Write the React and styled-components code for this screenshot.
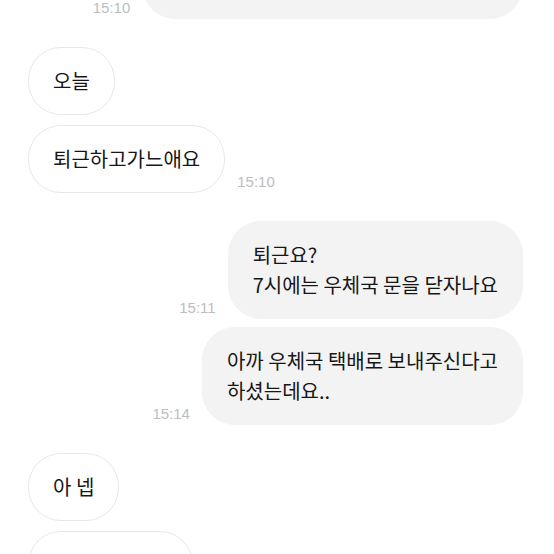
import React from "react"
import styled, { createGlobalStyle } from "styled-components"

const GlobalStyle = createGlobalStyle`
  html, body {
    margin: 0;
    padding: 0;
    background: #ffffff;
  }
  body {
    width: 554px;
    height: 554px;
    overflow: hidden;
    font-family: "Noto Sans CJK KR", "Noto Sans", sans-serif;
  }
`

const Screen = styled.div`
  width: 554px;
  height: 554px;
  overflow: hidden;
  background: #ffffff;
`

const List = styled.div`
  display: flex;
  flex-direction: column;
  gap: 28px;
  margin-top: -49px;
  padding: 0 31px 0 28px;
`

const Group = styled.div`
  display: flex;
  flex-direction: column;
  gap: ${(p) => (p.$mine ? "8px" : "10px")};
`

const Row = styled.div`
  display: flex;
  align-items: flex-end;
  justify-content: ${(p) => (p.$mine ? "flex-end" : "flex-start")};
  gap: 12px;
`

const Bubble = styled.div`
  box-sizing: border-box;
  max-width: 400px;
  padding: 18px 24px;
  border-radius: 33px;
  font-size: 20px;
  line-height: 30px;
  color: #161616;
  white-space: pre-line;
  background: ${(p) => (p.$mine ? "#f3f3f3" : "#ffffff")};
  border: 1px solid ${(p) => (p.$mine ? "#f3f3f3" : "#e7e7e7")};
`

const Time = styled.span`
  flex: none;
  margin-bottom: 3px;
  font-family: "Liberation Sans", Arial, sans-serif;
  font-size: 15px;
  line-height: 17px;
  color: #bdbdbd;
  order: ${(p) => (p.$mine ? -1 : 1)};
`

const groups = [
  {
    mine: true,
    items: [{ text: "네 그럼 퇴근하고 우체국으로 바로갈게요", time: "15:10" }],
  },
  {
    mine: false,
    items: [{ text: "오늘" }, { text: "퇴근하고가느애요", time: "15:10" }],
  },
  {
    mine: true,
    items: [
      { text: "퇴근요?\n7시에는 우체국 문을 닫자나요", time: "15:11" },
      { text: "아까 우체국 택배로 보내주신다고\n하셨는데요..", time: "15:14" },
    ],
  },
  {
    mine: false,
    items: [{ text: "아 넵" }, { text: "네 알겠습니다" }],
  },
]

export default function App() {
  return (
    <Screen>
      <GlobalStyle />
      <List>
        {groups.map((g, i) => (
          <Group key={i} $mine={g.mine}>
            {g.items.map((m, j) => (
              <Row key={j} $mine={g.mine}>
                <Bubble $mine={g.mine}>{m.text}</Bubble>
                {m.time ? <Time $mine={g.mine}>{m.time}</Time> : null}
              </Row>
            ))}
          </Group>
        ))}
      </List>
    </Screen>
  )
}
